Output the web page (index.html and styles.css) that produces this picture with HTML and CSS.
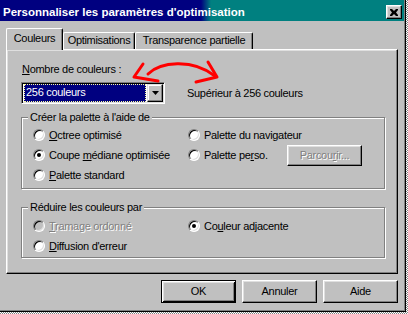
FILE: index.html
```html
<!DOCTYPE html>
<html lang="fr">
<head>
  <meta charset="UTF-8">
  <title>Personnaliser les paramètres d'optimisation</title>
  <link rel="stylesheet" href="styles.css">
</head>
<body>

  <div class="window">
    <div class="title-bar">
      <span class="title">Personnaliser les paramètres d'optimisation</span>
      <button class="close-btn" aria-label="Fermer">
        <svg width="8" height="7" viewBox="0 0 8 7"><path d="M0 0h2l2 2 2-2h2v1L6 3.5 8 6v1H6L4 5 2 7H0V6l2-2.5L0 1z" fill="#000"/></svg>
      </button>
    </div>

    <div class="window-body">
      <div class="tabs">
        <div class="tab active" style="width: 57px">Couleurs</div>
        <div class="tab" style="width: 72px">Optimisations</div>
        <div class="tab" style="width: 118px">Transparence partielle</div>
      </div>

      <div class="panel">
        <div class="field-label"><u>N</u>ombre de couleurs :</div>
        <div class="count-row">
          <div class="combo">
            <div class="combo-value"><span>256 couleurs</span></div>
            <div class="combo-arrow">
              <svg width="7" height="4" viewBox="0 0 7 4"><path d="M0 0h7L3.5 4z" fill="#000"/></svg>
            </div>
          </div>
          <span class="hint">Supérieur à 256 couleurs</span>
        </div>

        <fieldset class="group">
          <legend>Créer la palette à l'aide de</legend>
          <div class="options">
            <div class="option"><span class="radio"></span><span><u>O</u>ctree optimisé</span></div>
            <div class="option"><span class="radio"></span><span>Palette du navigateur</span></div>
            <span></span>
            <div class="option"><span class="radio checked"></span><span>Coupe <u>m</u>édiane optimisée</span></div>
            <div class="option"><span class="radio"></span><span>Palette pe<u>r</u>so.</span></div>
            <button class="btn small" disabled>Parcou<u>r</u>ir...</button>
            <div class="option"><span class="radio"></span><span><u>P</u>alette standard</span></div>
          </div>
        </fieldset>

        <fieldset class="group reduce">
          <legend>Réduire les couleurs par</legend>
          <div class="options">
            <div class="option disabled"><span class="radio"></span><span><u>T</u>ramage ordonné</span></div>
            <div class="option"><span class="radio checked"></span><span>Co<u>u</u>leur adjacente</span></div>
            <span></span>
            <div class="option"><span class="radio"></span><span><u>D</u>iffusion d'erreur</span></div>
          </div>
        </fieldset>
      </div>

      <div class="actions">
        <button class="btn default">OK</button>
        <button class="btn">Annuler</button>
        <button class="btn">Aide</button>
      </div>
    </div>

    <!-- red hand-drawn arrow over the dialog -->
    <svg class="scribble" width="100" height="35" viewBox="125 55 100 35">
      <g fill="none" stroke="#ff0000" stroke-width="3" stroke-linecap="round" stroke-linejoin="round">
        <path d="M143 64L134 77L158 81"/>
        <path d="M148 74C160 62 192 58 215 76"/>
        <path d="M208 62L217 77L196 82"/>
      </g>
    </svg>
  </div>

</body>
</html>
```

FILE: styles.css
```css
* {
  box-sizing: border-box;
}

body {
  margin: 0;
  width: 408px;
  height: 314px;
  overflow: hidden;
  background: repeating-conic-gradient(#808080 0 25%, #fff 0 50%) 0 0 / 2px 2px;
  font-family: "Liberation Sans", Arial, sans-serif;
  font-size: 11px;
  line-height: 13px;
  letter-spacing: -0.3px;
  color: #000;
}

.window {
  position: relative;
  width: 406px;
  height: 312px;
  padding: 0 1px 1px 0;
  background: #c0c0c0;
  border-right: 1px solid #000;
  border-bottom: 1px solid #000;
  box-shadow: inset -1px -1px #808080;
}

.title-bar {
  display: flex;
  align-items: center;
  justify-content: space-between;
  height: 21px;
  padding: 3px 2px 0 3px;
  background: linear-gradient(90deg, #000080 0 201px, #008080 211px);
  color: #fff;
}

.title {
  font-weight: bold;
  font-size: 11.5px;
  letter-spacing: 0;
}

.close-btn {
  display: flex;
  align-items: center;
  justify-content: center;
  width: 16px;
  height: 14px;
  padding: 0;
  background: #c0c0c0;
  border: 1px solid;
  border-color: #fff #000 #000 #fff;
  box-shadow: inset -1px -1px #808080, inset 1px 1px #dfdfdf;
}

.window-body {
  padding: 7px 6px 0;
}

/* tabs */
.tabs {
  position: relative;
  z-index: 1;
  display: flex;
  align-items: flex-end;
  height: 21px;
}

.tab {
  display: flex;
  justify-content: center;
  height: 17px;
  padding-top: 1px;
  background: #c0c0c0;
  border-top: 1px solid #fff;
  border-left: 1px solid #fff;
  border-right: 1px solid #000;
  border-radius: 2px 2px 0 0;
  box-shadow: inset -1px 0 #808080;
}

.tab.active {
  height: 22px;
  margin-bottom: -1px;
  padding-top: 3px;
}

.panel {
  height: 225px;
  padding: 13px 0 0 14px;
  border: 1px solid;
  border-color: #fff #000 #000 #fff;
  box-shadow: inset -1px -1px #808080, inset 1px 1px #dfdfdf;
}

.field-label {
  margin-left: 1px;
}

.count-row {
  display: flex;
  align-items: center;
  margin-top: 6px;
}

.combo {
  display: flex;
  width: 144px;
  height: 22px;
  padding: 1px;
  background: #fff;
  border: 1px solid;
  border-color: #808080 #fff #fff #808080;
  box-shadow: inset 1px 1px #000, inset -1px -1px #dfdfdf;
}

.combo-value {
  flex: 1;
  margin: 0 1px;
  padding-left: 1px;
  background: #000080;
  border: 1px dotted #ffffa0;
  color: #fff;
  line-height: 15px;
}

.combo-arrow {
  display: flex;
  align-items: center;
  justify-content: center;
  width: 16px;
  background: #c0c0c0;
  border: 1px solid;
  border-color: #dfdfdf #000 #000 #dfdfdf;
  box-shadow: inset -1px -1px #808080, inset 1px 1px #fff;
}

.hint {
  margin-left: 22px;
}

/* group boxes */
.group {
  width: 364px;
  min-width: 0;
  margin: 7px 0 0;
  padding: 0 0 3px 11px;
  border: 1px solid #808080;
  box-shadow: inset 1px 1px #fff, 1px 1px #fff;
}

.group legend {
  margin-left: -5px;
  padding: 0 2px;
  background: #c0c0c0;
}

.group.reduce {
  margin-top: 12px;
  padding-bottom: 1px;
}

.options {
  display: grid;
  grid-template-columns: 155px 99px 75px;
  grid-auto-rows: 20px;
  align-items: center;
  margin-top: 1px;
}

.reduce .options {
  margin-top: 2px;
}

.option {
  display: flex;
  align-items: center;
  gap: 4px;
  white-space: nowrap;
}

.option.disabled {
  color: #808080;
  text-shadow: 1px 1px #fff;
}

.radio {
  position: relative;
  flex: none;
  width: 12px;
  height: 12px;
  border-radius: 50%;
  background: #fff;
  border: 1px solid;
  border-color: #808080 #fff #fff #808080;
  box-shadow: inset 1px 1px #000, inset -1px -1px #dfdfdf;
}

.option.disabled .radio {
  background: #c0c0c0;
}

.radio.checked::after {
  content: "";
  position: absolute;
  left: 3px;
  top: 3px;
  width: 4px;
  height: 4px;
  border-radius: 50%;
  background: #000;
}

/* buttons */
.btn {
  width: 75px;
  height: 23px;
  padding: 0;
  font: inherit;
  letter-spacing: inherit;
  color: #000;
  background: #c0c0c0;
  border: 1px solid;
  border-color: #fff #000 #000 #fff;
  box-shadow: inset -1px -1px #808080, inset 1px 1px #dfdfdf;
}

.btn.small {
  height: 21px;
}

.btn:disabled {
  color: #808080;
  text-shadow: 1px 1px #fff;
}

.btn.default {
  border-color: #000;
  box-shadow: inset 1px 1px #fff, inset -1px -1px #000, inset 2px 2px #dfdfdf, inset -2px -2px #808080;
}

.actions {
  display: flex;
  justify-content: flex-end;
  gap: 6px;
  margin-top: 6px;
}

.scribble {
  position: absolute;
  left: 125px;
  top: 55px;
}
```
